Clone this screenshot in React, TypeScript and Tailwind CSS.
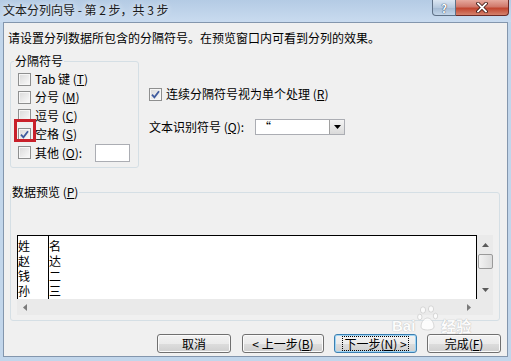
import React from "react";

function Check({ checked }: { checked?: boolean }) {
  return (
    <span className="w-[13px] h-[13px] shrink-0 border border-[#8e8f8f] bg-gradient-to-br from-[#d9d9d9] to-[#fbfbfb] shadow-[inset_0_0_0_1px_#f6f6f6] flex items-center justify-center">
      {checked && (
        <svg width="11" height="11" viewBox="0 0 11 11">
          <path d="M2 5.6 L4.4 8.3 L9 2.2" stroke="#3f5b9e" strokeWidth="1.8" fill="none" />
        </svg>
      )}
    </span>
  );
}

function Btn({ w, children, focused }: { w: string; children: React.ReactNode; focused?: boolean }) {
  return (
    <div
      className={`${w} h-[19px] rounded-[3px] border ${
        focused ? "border-[#3c7fb1] shadow-[inset_0_0_0_1px_#9fd5f5]" : "border-[#707070] shadow-[inset_0_0_0_1px_#fbfbfb]"
      } bg-[linear-gradient(to_bottom,#f2f2f2_0%,#ebebeb_50%,#dddddd_51%,#cfcfcf_100%)] flex items-center justify-center`}
    >
      <span className={`${focused ? "outline outline-1 outline-dotted outline-black px-[1px]" : ""} leading-[13px]`}>{children}</span>
    </div>
  );
}

function Row({ children }: { children: React.ReactNode }) {
  return <div className="h-[15px] leading-[15px] overflow-hidden">{children}</div>;
}

export default function App() {
  return (
    <div className="w-[511px] h-[361px] flex flex-col bg-[#c2d6eb] font-['Noto_Sans_CJK_SC','Noto_Sans',sans-serif] text-[12px] leading-[14px] text-black overflow-hidden relative">
      {/* Title bar */}
      <div className="h-[22px] flex items-start bg-[linear-gradient(to_bottom,#b4cbe4,#c9dbef)]">
        <div className="pl-[3px] pt-[3px] text-[12px] leading-[14px] text-[#1b1b1b] [text-shadow:0_0_6px_#ffffff]">
          文本分列向导 - 第 2 步，共 3 步
        </div>
        <div className="ml-auto mr-[2px] flex">
          <div className="w-[24px] h-[16px] border border-[#5f7187] border-t-0 rounded-bl-[4px] bg-[linear-gradient(to_bottom,#dbe6f2,#b6c9de_50%,#a3b9d2_51%,#c2d5e9)] flex items-center justify-center">
            <span className="text-[11px] leading-[12px] font-bold text-white [text-shadow:0_0_1px_#2b3b50,0_0_1px_#2b3b50]">?</span>
          </div>
          <div className="w-[53px] h-[16px] border border-[#6b2a26] border-t-0 border-l-0 rounded-br-[4px] bg-[linear-gradient(to_bottom,#e6a99e,#d0786a_45%,#c1452f_55%,#d4826d)] flex items-center justify-center">
            <svg width="12" height="11" viewBox="0 0 12 11">
              <path d="M2 1.5 L10 9.5 M10 1.5 L2 9.5" stroke="#3a1410" strokeWidth="3.4" strokeLinecap="square" />
              <path d="M2 1.5 L10 9.5 M10 1.5 L2 9.5" stroke="#ffffff" strokeWidth="1.8" strokeLinecap="square" />
            </svg>
          </div>
        </div>
      </div>

      {/* Client */}
      <div className="mx-[3px] h-[335px] border border-[#8396ad] bg-[#f0f0f0] flex flex-col">
        <div className="pl-[4px] pt-[8px] h-[22px]">
          请设置分列数据所包含的分隔符号。在预览窗口内可看到分列的效果。
        </div>

        <div className="flex mt-[9px] ml-[6px]">
          <fieldset className="w-[129px] border border-[#d5dfe5] rounded-[3px] pt-[2px] pb-[5px]">
            <legend className="ml-[3px] px-[1px] leading-[14px]">分隔符号</legend>
            <div className="flex flex-col pl-[7px]">
              <div className="h-[18px] flex items-center gap-[4px]">
                <Check />
                <span>Tab 键 (<u>T</u>)</span>
              </div>
              <div className="h-[18px] flex items-center gap-[4px]">
                <Check />
                <span>分号 (<u>M</u>)</span>
              </div>
              <div className="h-[19px] flex items-center gap-[4px]">
                <Check />
                <span>逗号 (<u>C</u>)</span>
              </div>
              <div className="h-[18px] flex items-center gap-[4px] relative">
                <Check checked />
                <span>空格 (<u>S</u>)</span>
                <span className="absolute left-[-4px] top-[-6px] w-[22px] h-[23px] border-[3px] border-[#c8202a]" />
              </div>
              <div className="h-[19px] flex items-center gap-[4px]">
                <Check />
                <span>其他 (<u>O</u>):</span>
                <span className="ml-[9px] w-[35px] h-[18px] border border-[#abadb3] bg-white" />
              </div>
            </div>
          </fieldset>

          <div className="ml-[10px] flex flex-col">
            <div className="mt-[33px] h-[14px] flex items-center gap-[4px]">
              <Check checked />
              <span>连续分隔符号视为单个处理 (<u>R</u>)</span>
            </div>
            <div className="mt-[18px] h-[16px] flex items-center">
              <span className="w-[106px]">文本识别符号 (<u>Q</u>):</span>
              <div className="w-[90px] h-[16px] border border-[#abadb3] bg-white flex items-stretch">
                <span className="flex-1 pl-[3px] leading-[14px]">“</span>
                <span className="w-[15px] border-l border-[#a0a0a0] bg-[linear-gradient(to_bottom,#f4f4f4,#dadada)] flex items-center justify-center">
                  <svg width="7" height="4" viewBox="0 0 7 4">
                    <path d="M0 0 H7 L3.5 4 Z" fill="#000" />
                  </svg>
                </span>
              </div>
            </div>
          </div>
        </div>

        {/* Preview */}
        <fieldset className="ml-[6px] mt-[17px] w-[490px] border border-[#d5dfe5] rounded-[3px] pt-[36px] pb-[5px]">
          <legend className="px-[1px] leading-[14px]">数据预览 (<u>P</u>)</legend>
          <div className="w-[476px] ml-[6px] flex flex-col">
            <div className="flex h-[64px]">
              <div className="w-[460px] border-t border-l border-r border-black bg-white flex">
                <div className="w-[31px] border-r border-black pt-[2px] text-[12px]">
                  <Row>姓</Row>
                  <Row>赵</Row>
                  <Row>钱</Row>
                  <Row>孙</Row>
                </div>
                <div className="pt-[2px] text-[12px]">
                  <Row>名</Row>
                  <Row>达</Row>
                  <Row>二</Row>
                  <Row>三</Row>
                </div>
              </div>
              <div className="w-[16px] bg-[#eaeaea] flex flex-col items-center">
                <div className="h-[17px] flex items-center justify-center pt-[2px]">
                  <svg width="7" height="4" viewBox="0 0 7 4">
                    <path d="M0 4 H7 L3.5 0 Z" fill="#5a5a5a" />
                  </svg>
                </div>
                <div className="w-[15px] h-[15px] mt-[2px] rounded-[2px] border border-[#9a9a9a] bg-[linear-gradient(to_right,#f3f3f3,#dcdcdc)]" />
                <div className="flex-1" />
                <div className="h-[17px] flex items-center justify-center pb-[2px]">
                  <svg width="7" height="4" viewBox="0 0 7 4">
                    <path d="M0 0 H7 L3.5 4 Z" fill="#5a5a5a" />
                  </svg>
                </div>
              </div>
            </div>
            <div className="flex h-[16px]">
              <div className="w-[460px] bg-[#eaeaea] flex items-center justify-between px-[6px]">
                <svg width="4" height="7" viewBox="0 0 4 7">
                  <path d="M4 0 V7 L0 3.5 Z" fill="#7a7a7a" />
                </svg>
                <svg width="4" height="7" viewBox="0 0 4 7">
                  <path d="M0 0 V7 L4 3.5 Z" fill="#7a7a7a" />
                </svg>
              </div>
              <div className="w-[16px] bg-[#eaeaea]" />
            </div>
          </div>
        </fieldset>

        {/* Buttons */}
        <div className="mt-[13px] flex justify-end pr-[6px] gap-[10px]">
          <div className="mr-[1px]">
            <Btn w="w-[74px]">取消</Btn>
          </div>
          <Btn w="w-[82px]">
            &lt; 上一步(<u>B</u>)
          </Btn>
          <Btn w="w-[83px]" focused>
            下一步(<u>N</u>) &gt;
          </Btn>
          <Btn w="w-[74px]">
            完成(<u>F</u>)
          </Btn>
        </div>
      </div>

      {/* Watermark */}
      <div className="absolute left-[392px] top-[305px] flex items-end gap-[2px] opacity-80 pointer-events-none">
        <span className="text-[15px] leading-[15px] font-bold text-white font-['Liberation_Sans',sans-serif] [text-shadow:0_0_1px_#b5b5b5,0_0_1px_#b5b5b5]">Bai</span>
        <svg width="22" height="28" viewBox="0 0 22 28">
          <g fill="#ffffff" stroke="#c8c8c8" strokeWidth="0.8">
            <ellipse cx="6" cy="5" rx="2.6" ry="3.2" />
            <ellipse cx="14" cy="4" rx="2.6" ry="3.2" />
            <ellipse cx="2.8" cy="12" rx="2.2" ry="2.8" />
            <ellipse cx="18.5" cy="11" rx="2.2" ry="2.8" />
            <path d="M4 22 C4 16 8 13 10.5 13 C13 13 17 16 17 22 C17 26 4 26 4 22 Z" />
          </g>
        </svg>
        <span className="text-[15px] leading-[15px] font-bold text-white [text-shadow:0_0_1px_#b5b5b5,0_0_1px_#b5b5b5]">经验</span>
      </div>
    </div>
  );
}
